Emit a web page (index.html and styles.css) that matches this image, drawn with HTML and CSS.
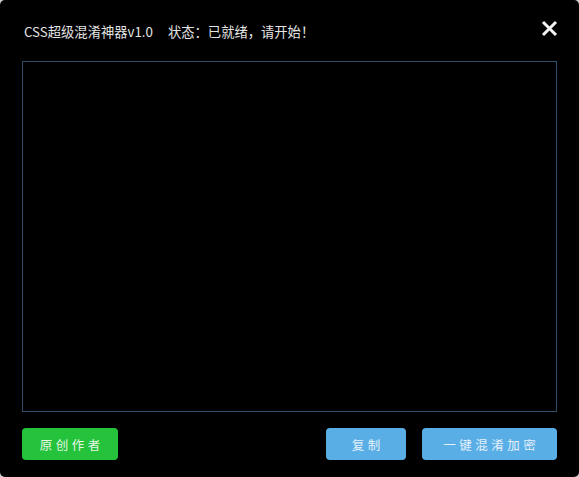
FILE: index.html
```html
<!DOCTYPE html>
<html lang="zh-CN">
<head>
<meta charset="utf-8">
<title>CSS超级混淆神器v1.0</title>
<link rel="stylesheet" href="styles.css">
</head>
<body>
<div class="window">
  <div class="header">
    <div class="title"><span class="name">CSS超级混淆神器v1.0</span><span class="status">状态：已就绪，请开始！</span></div>
    <div class="close" aria-label="关闭">
      <svg width="17" height="17" viewBox="0 0 17 17"><path d="M2 2 L15 15 M15 2 L2 15" stroke="#f2f2f2" stroke-width="3" stroke-linecap="butt"/></svg>
    </div>
  </div>
  <textarea class="editor" spellcheck="false"></textarea>
  <div class="footer">
    <button class="btn btn-green author">原创作者</button>
    <div class="spacer"></div>
    <button class="btn btn-blue copy">复制</button>
    <button class="btn btn-blue encrypt">一键混淆加密</button>
  </div>
</div>
</body>
</html>
```
FILE: styles.css
```css
html, body {
  margin: 0;
  padding: 0;
  background: #cfcfcf;
}
body {
  font-family: "Noto Sans CJK SC", "Noto Sans", sans-serif;
}
.window {
  width: 579px;
  height: 477px;
  box-sizing: border-box;
  background: #000;
  border-radius: 5px;
  padding: 0 22px 17px 22px;
  display: flex;
  flex-direction: column;
}
.header {
  height: 61px;
  display: flex;
  align-items: flex-start;
  justify-content: space-between;
}
.title {
  padding-left: 2px;
  margin-top: 23px;
  font-family: "Noto Sans CJK TC", "Noto Sans CJK SC", sans-serif;
  font-size: 13.3px;
  line-height: 18px;
  color: #e4e4e4;
  white-space: nowrap;
}
.status {
  margin-left: 15px;
}
.close {
  margin-top: 20px;
  margin-right: -1px;
  width: 17px;
  height: 17px;
}
.close svg {
  display: block;
}
.editor {
  display: block;
  height: 351px;
  box-sizing: border-box;
  margin: 0;
  background: #000;
  border: 1px solid #2f4c68;
  resize: none;
  outline: none;
  color: #ddd;
}
.footer {
  margin-top: 16px;
  display: flex;
  gap: 16px;
}
.spacer {
  flex: 1;
}
.btn {
  height: 32px;
  border: none;
  border-radius: 4px;
  padding: 0;
  font-family: "Noto Sans CJK SC", sans-serif;
  font-size: 12.5px;
  letter-spacing: 3.5px;
  text-indent: 3.5px;
  cursor: pointer;
}
.btn-green {
  background: #25c23b;
  color: #e6f6e6;
}
.btn-blue {
  background: #5aaee6;
  color: #e4f0fa;
}
.author {
  width: 96px;
}
.copy {
  width: 80px;
}
.encrypt {
  width: 135px;
}
```
